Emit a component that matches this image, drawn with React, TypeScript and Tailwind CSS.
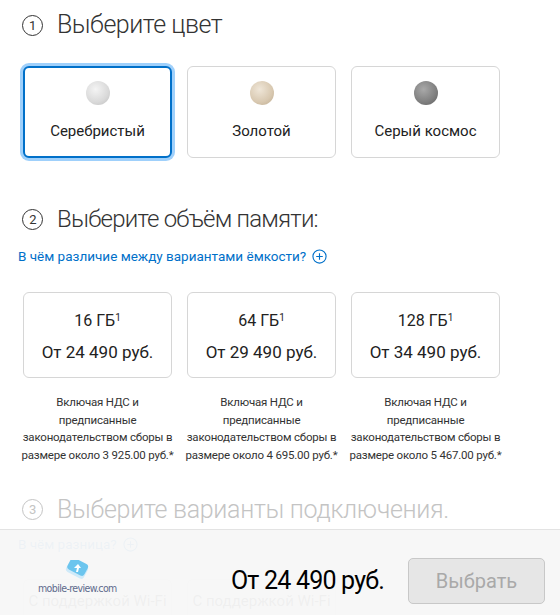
import React from "react";

const font = { fontFamily: 'Roboto, "Noto Sans", sans-serif' };

const colors = [
  { name: "Серебристый", swatch: "radial-gradient(circle at 40% 35%, #f4f4f4 0%, #d9d9d9 60%, #bdbdbd 100%)", selected: true },
  { name: "Золотой", swatch: "radial-gradient(circle at 40% 35%, #efe6d8 0%, #d8c8b0 60%, #bba98d 100%)", selected: false },
  { name: "Серый космос", swatch: "radial-gradient(circle at 40% 35%, #a9a9a9 0%, #7f7f7f 60%, #5e5e5e 100%)", selected: false },
];

const sizes = [
  { gb: "16 ГБ", price: "От 24 490 руб.", fee: "3 925.00" },
  { gb: "64 ГБ", price: "От 29 490 руб.", fee: "4 695.00" },
  { gb: "128 ГБ", price: "От 34 490 руб.", fee: "5 467.00" },
];

const StepNum = ({ n, muted }: { n: number; muted?: boolean }) => (
  <span
    className={`flex items-center justify-center w-[21px] h-[21px] rounded-full border text-[13px] font-normal leading-none ${
      muted ? "border-[#c4c4c4] text-[#c4c4c4]" : "border-[#333] text-[#333]"
    }`}
  >
    {n}
  </span>
);

const PlusCircle = ({ className }: { className?: string }) => (
  <svg viewBox="0 0 16 16" className={className} fill="none" stroke="currentColor" strokeWidth="1.2">
    <circle cx="8" cy="8" r="7" />
    <path d="M8 4.5v7M4.5 8h7" />
  </svg>
);

const App: React.FC = () => {
  return (
    <div className="relative h-[615px] w-[560px] overflow-hidden bg-white text-[#333]" style={font}>
      <div className="pl-[22px] pt-[12px]">
        <h2 className="flex items-center gap-[14px] h-[26px] text-[25px] font-light tracking-[-0.5px]">
          <StepNum n={1} />
          <span>Выберите цвет</span>
        </h2>

        <div className="mt-[28px] ml-[1px] flex gap-[15px]">
          {colors.map((c) => (
            <div
              key={c.name}
              className={`flex h-[92px] w-[149px] flex-col items-center rounded-[6px] bg-white ${
                c.selected
                  ? "border-2 border-[#0070c9] shadow-[0_0_0_3px_#9fd0fb]"
                  : "border border-[#d6d6d6]"
              }`}
            >
              <div
                className={`h-[24px] w-[24px] rounded-full ${c.selected ? "mt-[13px]" : "mt-[14px]"}`}
                style={{ background: c.swatch }}
              />
              <div className="mt-[15px] text-[15px] text-[#222]">{c.name}</div>
            </div>
          ))}
        </div>

        <h2 className="mt-[48px] flex items-center gap-[14px] h-[26px] text-[24px] font-light tracking-[-0.8px]">
          <StepNum n={2} />
          <span>Выберите объём памяти:</span>
        </h2>

        <div className="mt-[14px] -ml-[4px] flex items-center gap-[6px] text-[13.5px] text-[#0070c9]">
          <span>В чём различие между вариантами ёмкости?</span>
          <PlusCircle className="h-[15px] w-[15px]" />
        </div>

        <div className="mt-[26px] ml-[1px] flex gap-[15px]">
          {sizes.map((s) => (
            <div key={s.gb} className="flex w-[149px] flex-col items-center">
              <div className="flex h-[86px] w-full flex-col items-center justify-center gap-[7px] rounded-[6px] border border-[#d6d6d6] pt-[4px]">
                <div className="text-[16px] text-[#222]">
                  {s.gb}
                  <sup className="text-[10px]">1</sup>
                </div>
                <div className="text-[17px] text-[#222]">{s.price}</div>
              </div>
              <p className="mt-[16px] whitespace-nowrap text-center text-[11.5px] leading-[17.5px] text-[#333] tracking-[-0.2px]">
                Включая НДС и
                <br />
                предписанные
                <br />
                законодательством сборы в
                <br />
                размере около {s.fee} руб.*
              </p>
            </div>
          ))}
        </div>

        <h2 className="mt-[32px] flex items-center gap-[14px] h-[26px] text-[25px] font-light tracking-[-0.3px] text-[#c4c4c4]">
          <StepNum n={3} muted />
          <span>Выберите варианты подключения.</span>
        </h2>

        <div className="mt-[12px] -ml-[4px] flex items-center gap-[6px] text-[13.5px] text-[#0070c9]">
          <span>В чём разница?</span>
          <PlusCircle className="h-[15px] w-[15px]" />
        </div>

        <div className="mt-[24px] ml-[1px] flex gap-[15px]">
          {["С поддержкой Wi-Fi", "С поддержкой Wi-Fi"].map((t, i) => (
            <div key={i} className="flex h-[80px] w-[149px] justify-center rounded-[6px] border border-[#d6d6d6] pt-[10px] text-[15px]">
              {t}
            </div>
          ))}
        </div>
      </div>

      {/* sticky summary bar */}
      <div className="absolute bottom-0 left-0 right-0 h-[86px] border-t border-[#e3e3e3] bg-[#f7f7f7]/[0.96]">
        <div className="absolute left-[38px] top-[30px] flex flex-col items-center">
          <svg width="26" height="20" viewBox="0 0 26 20">
            <rect x="3" y="2" width="20" height="14" rx="3" transform="rotate(28 13 9)" fill="#cfeaf9" />
            <rect x="4" y="0" width="19" height="13" rx="3" transform="rotate(28 13 7)" fill="#6cc5ee" />
            <path d="M10 8l4-4 3 4h-2l-1 4h-2l1-4z" fill="#fff" />
          </svg>
          <span className="mt-[1px] text-[10.5px] tracking-[-0.6px] text-[#5e6a8c]" style={{ fontFamily: '"Liberation Sans Narrow", "DejaVu Sans Condensed", sans-serif' }}>
            mobile-review.com
          </span>
        </div>
        <div className="flex items-center justify-end gap-[24px] pr-[15px] pt-[28px]">
          <span className="text-[25px] tracking-[-0.8px] text-black">От 24 490 руб.</span>
          <button className="h-[46px] w-[137px] rounded-[5px] border border-[#c8c8c8] bg-[#e6e6e6] text-[20px] text-[#a9a9a9]">
            Выбрать
          </button>
        </div>
      </div>
    </div>
  );
};

export default App;
